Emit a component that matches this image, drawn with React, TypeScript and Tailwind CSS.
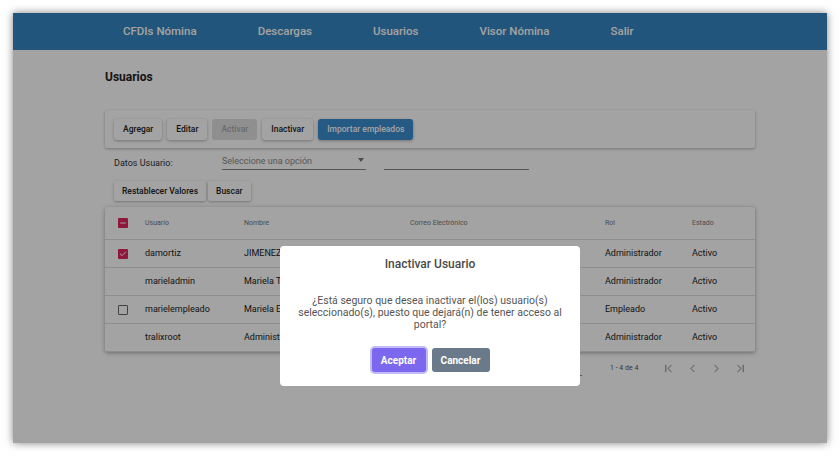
import { ChevronLeft, ChevronRight, ChevronFirst, ChevronLast, Check, Minus } from 'lucide-react';

const NAV = ['CFDIs Nómina', 'Descargas', 'Usuarios', 'Visor Nómina', 'Salir'];

const ROWS = [
  { user: 'damortiz', name: 'JIMENEZ ORTIZ DANIEL ALBERTO', mail: 'damortiz@tralix.com', rol: 'Administrador', box: 'checked' },
  { user: 'marieladmin', name: 'Mariela Trejo Admin', mail: 'mariela.admin@tralix.com', rol: 'Administrador', box: 'none' },
  { user: 'marielempleado', name: 'Mariela Empleado', mail: 'mariela@tralix.com', rol: 'Empleado', box: 'empty' },
  { user: 'tralixroot', name: 'Administrador Tralix', mail: 'root@tralix.com', rol: 'Administrador', box: 'none' },
];

const COLS = 'grid grid-cols-[40px_99px_166px_195px_87px_1fr] items-center';

function Box({ kind }: { kind: string }) {
  if (kind === 'checked')
    return (
      <span className="flex h-[10px] w-[10px] items-center justify-center rounded-[1px] bg-[#e0245e]">
        <Check size={8} strokeWidth={3} className="text-white" />
      </span>
    );
  if (kind === 'minus')
    return (
      <span className="flex h-[10px] w-[10px] items-center justify-center rounded-[1px] bg-[#e0245e]">
        <Minus size={8} strokeWidth={3.5} className="text-white" />
      </span>
    );
  if (kind === 'empty') return <span className="block h-[10px] w-[10px] rounded-[1px] border-[1.5px] border-[#666]" />;
  return <span className="block h-[10px] w-[10px]" />;
}

function Btn({ label, variant = 'plain' }: { label: string; variant?: 'plain' | 'disabled' | 'blue' }) {
  const styles =
    variant === 'blue'
      ? 'bg-[#3a8dd0] text-white'
      : variant === 'disabled'
        ? 'bg-[#e0e0e0] text-[#a8a8a8] shadow-none'
        : 'bg-white text-[#222]';
  return (
    <button className={`h-[21px] rounded-[3px] px-[9px] text-[8.5px] font-medium shadow-[0_1px_3px_rgba(0,0,0,0.3)] ${styles}`}>
      {label}
    </button>
  );
}

export default function App() {
  return (
    <div className="h-[456px] w-[840px] bg-white p-[13px]" style={{ fontFamily: 'Roboto, "Noto Sans", sans-serif' }}>
      <div className="relative h-[430px] w-[814px] overflow-hidden bg-white shadow-[0_0_8px_rgba(0,0,0,0.5)]">
        {/* header */}
        <div className="flex h-[37px] items-center gap-[61px] bg-[#3586c0] pl-[110px] text-[11.5px] font-medium text-white">
          {NAV.map(n => (
            <span key={n}>{n}</span>
          ))}
        </div>

        <div className="w-[742px] pl-[92px]">
          <h1 className="mt-[20px] h-[14px] text-[12px] font-bold leading-[14px] text-[#222]">Usuarios</h1>

          {/* toolbar */}
          <div className="mt-[26px] flex h-[38px] items-center gap-[5px] rounded-[2px] bg-white px-[9px] shadow-[0_1px_3px_rgba(0,0,0,0.3)]">
            <Btn label="Agregar" />
            <Btn label="Editar" />
            <Btn label="Activar" variant="disabled" />
            <Btn label="Inactivar" />
            <Btn label="Importar empleados" variant="blue" />
          </div>

          {/* filters */}
          <div className="mt-[6px] flex h-[16px] items-start pl-[9px] text-[9px]">
            <span className="w-[108px] pt-[3px] text-[#333]">Datos Usuario:</span>
            <div className="relative h-[16px] w-[144px] border-b border-[#888] text-[#888]">
              <span className="block pt-[1px]">Seleccione una opción</span>
              <span className="absolute right-[2px] top-[4px] h-0 w-0 border-x-[3px] border-t-[4px] border-x-transparent border-t-[#777]" />
            </div>
            <div className="ml-[18px] h-[16px] w-[145px] border-b border-[#888]" />
          </div>

          <div className="mt-[11px] flex h-[20px] gap-[2px] pl-[9px]">
            <button className="h-[20px] rounded-[2px] bg-white px-[8px] text-[8.5px] font-medium text-[#222] shadow-[0_1px_3px_rgba(0,0,0,0.3)]">
              Restablecer Valores
            </button>
            <button className="h-[20px] rounded-[2px] bg-white px-[8px] text-[8.5px] font-medium text-[#222] shadow-[0_1px_3px_rgba(0,0,0,0.3)]">
              Buscar
            </button>
          </div>

          {/* table */}
          <div className="mt-[6px] rounded-[2px] bg-white shadow-[0_1px_4px_rgba(0,0,0,0.35)]">
            <div className={`${COLS} h-[33px] border-b border-[#ddd] text-[7px] text-[#777]`}>
              <span className="pl-[13px]">
                <Box kind="minus" />
              </span>
              <span>Usuario</span>
              <span>Nombre</span>
              <span>Correo Electrónico</span>
              <span>Rol</span>
              <span>Estado</span>
            </div>
            {ROWS.map(r => (
              <div key={r.user} className={`${COLS} h-[28px] border-b border-[#ddd] text-[9px] text-[#222]`}>
                <span className="pl-[13px]">
                  <Box kind={r.box} />
                </span>
                <span>{r.user}</span>
                <span className="truncate pr-2">{r.name}</span>
                <span className="truncate pr-2">{r.mail}</span>
                <span>{r.rol}</span>
                <span>Activo</span>
              </div>
            ))}
          </div>

          {/* pagination */}
          <div className="mt-[6px] flex h-[20px] items-center justify-end pr-[8px] text-[7px] text-[#555]">
            <div className="relative flex h-[16px] w-[30px] items-center border-b border-[#888]">
              <span className="pl-1 text-[9px]">5</span>
              <span className="absolute right-[3px] top-[6px] h-0 w-0 border-x-[3px] border-t-[4px] border-x-transparent border-t-[#666]" />
            </div>
            <span className="ml-[28px] w-[42px]">1 - 4 de 4</span>
            <div className="ml-[10px] flex items-center gap-[11px] text-[#666]">
              <ChevronFirst size={13} strokeWidth={1.5} />
              <ChevronLeft size={13} strokeWidth={1.5} />
              <ChevronRight size={13} strokeWidth={1.5} />
              <ChevronLast size={13} strokeWidth={1.5} />
            </div>
          </div>
        </div>

        {/* overlay */}
        <div className="absolute inset-0 bg-black/[0.36]" />

        {/* dialog */}
        <div className="absolute left-[267px] top-[233px] flex h-[140px] w-[300px] flex-col items-center rounded-[4px] bg-white">
          <h2 className="mt-[10px] text-[12px] font-medium leading-[16px] text-[#4a4a4a]">Inactivar Usuario</h2>
          <p className="mt-[23px] w-[290px] text-center text-[10.5px] leading-[12px] text-[#555]">
            ¿Está seguro que desea inactivar el(los) usuario(s) seleccionado(s), puesto que dejará(n) de tener acceso al portal?
          </p>
          <div className="mt-[17px] flex gap-[6px] pl-[1px]">
            <button className="h-[24px] w-[54px] rounded-[3px] bg-[#7b68ee] text-[10px] font-bold text-white ring-2 ring-[#c2b9f7]">
              Aceptar
            </button>
            <button className="h-[24px] w-[58px] rounded-[3px] bg-[#6b7a8a] text-[10px] font-bold text-white">Cancelar</button>
          </div>
        </div>
      </div>
    </div>
  );
}
